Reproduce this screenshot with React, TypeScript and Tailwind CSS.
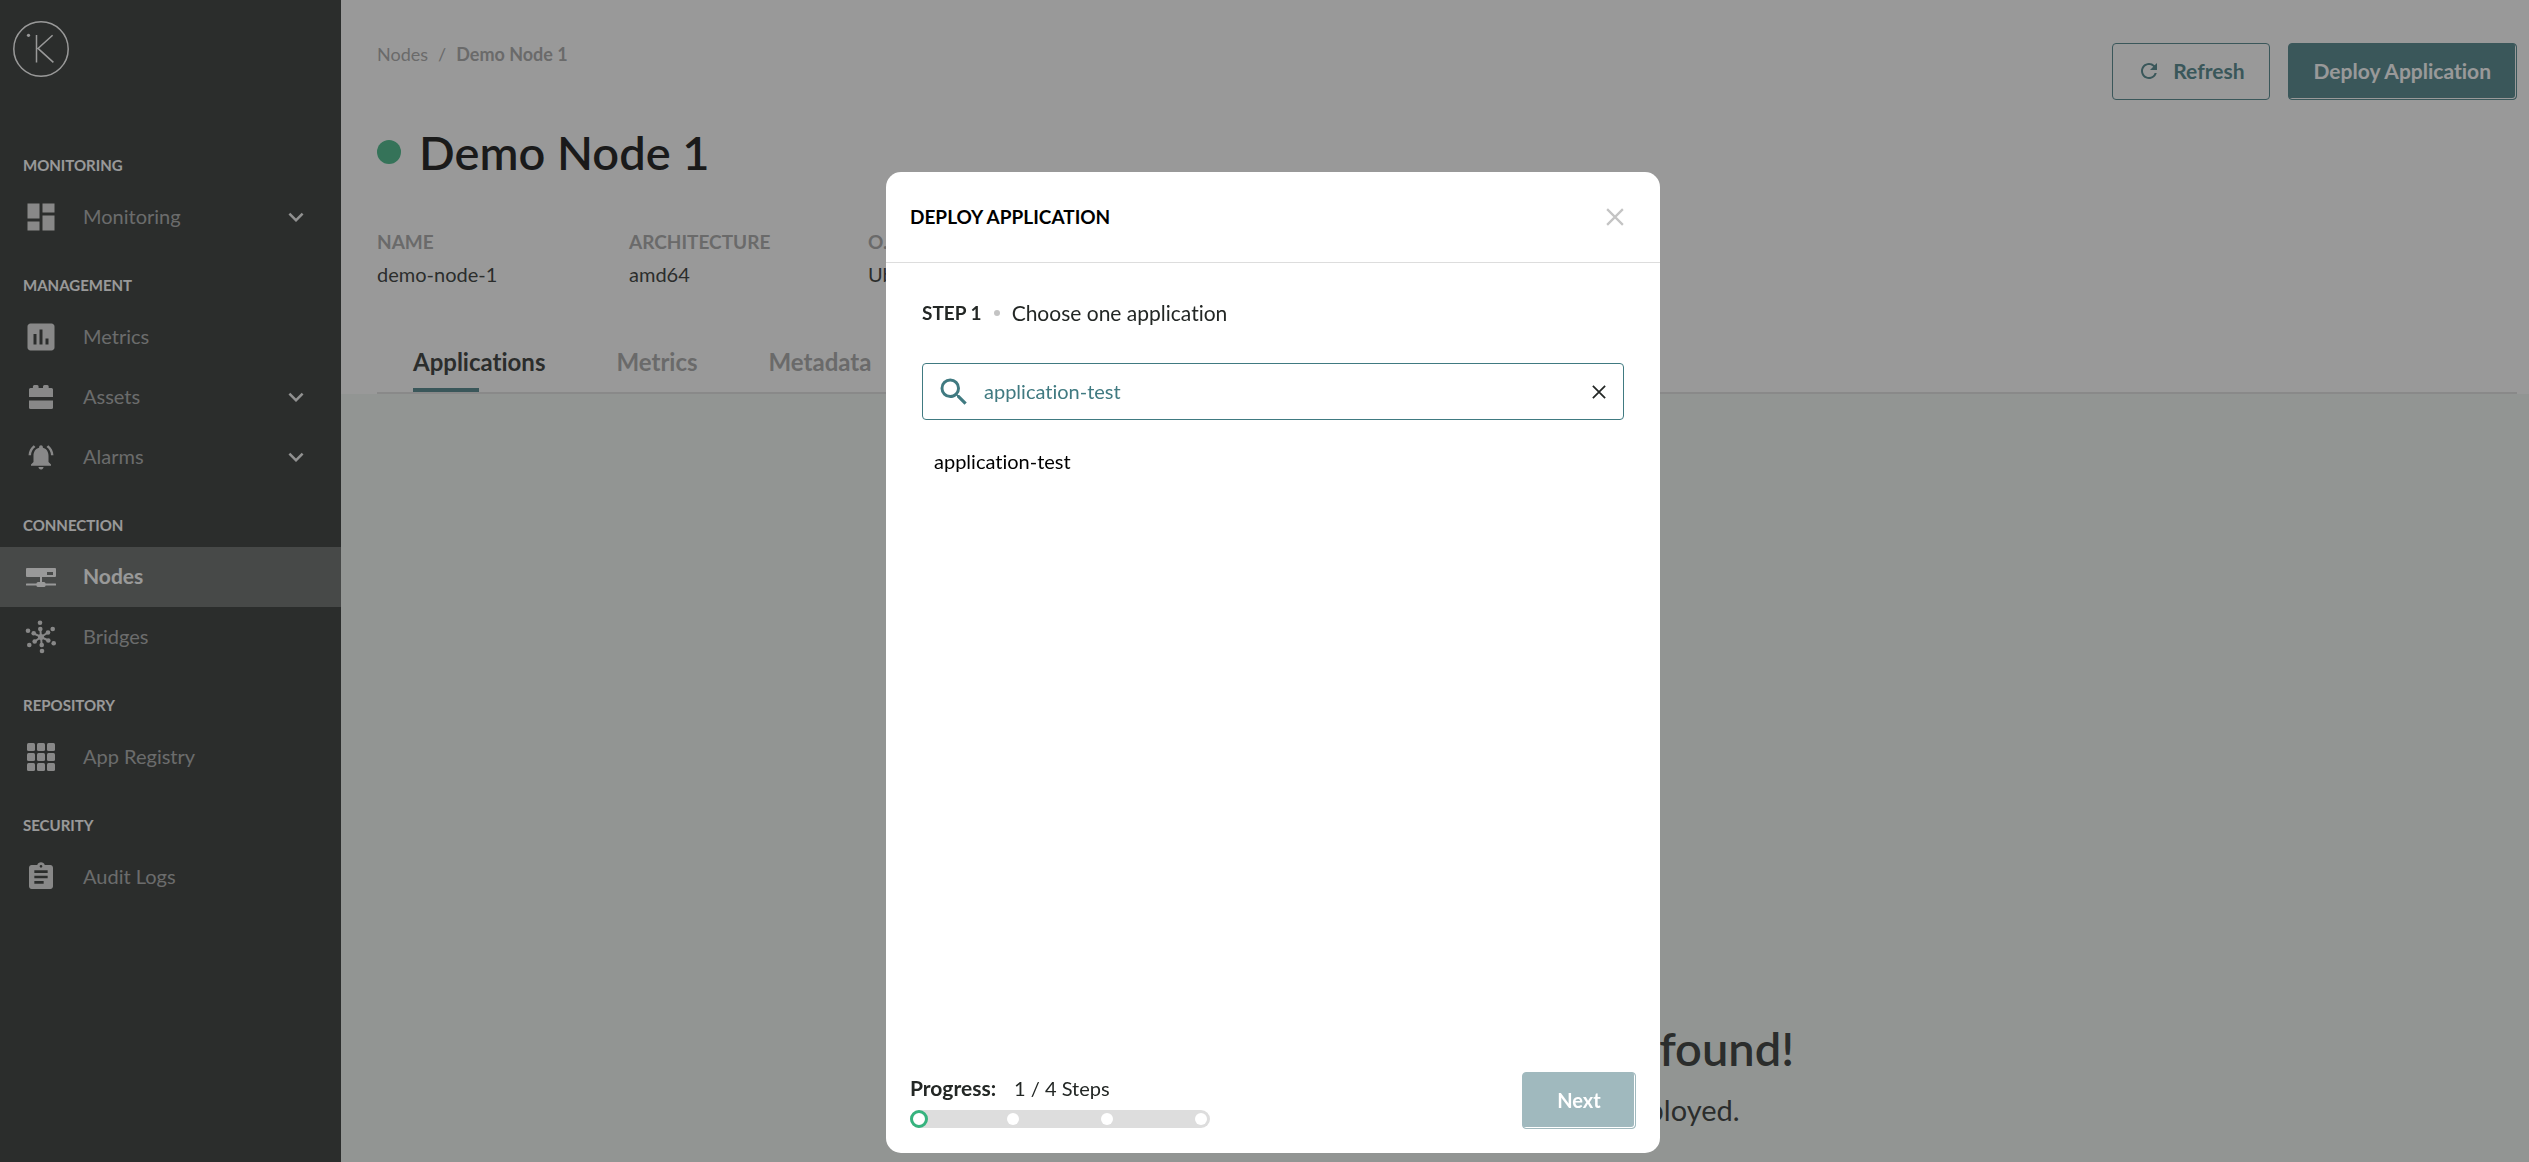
import React from 'react';
import {
  MdAssessment,
  MdAssignment,
  MdDashboard,
  MdExpandMore,
  MdNotificationsActive,
  MdRefresh,
  MdSearch,
} from 'react-icons/md';

type NavItem = {
  label: string;
  icon: React.ReactNode;
  expandable?: boolean;
  active?: boolean;
};

function Logo() {
  return (
    <svg viewBox="0 0 56 56" className="size-14" fill="none" stroke="white" strokeWidth="1.5" aria-hidden="true">
      <circle cx="28" cy="28" r="27.2" />
      <circle cx="15.5" cy="14.3" r="1.6" fill="white" stroke="none" />
      <path d="M23.5 14v27.6M39.6 14.2 25 27.4l15.4 14" />
    </svg>
  );
}

function AssetsIcon() {
  return (
    <svg viewBox="0 0 36 36" className="size-9" fill="currentColor" aria-hidden="true">
      <path d="M6 18v-7.5A1.5 1.5 0 0 1 7.5 9H9.9V7.5A1.5 1.5 0 0 1 11.4 6h2.7a1.5 1.5 0 0 1 1.5 1.5V9h4.4V7.5A1.5 1.5 0 0 1 21.5 6h2.7a1.5 1.5 0 0 1 1.5 1.5V9h2.8A1.5 1.5 0 0 1 30 10.5V18z" />
      <path d="M6 21.5h24v7a1.5 1.5 0 0 1-1.5 1.5h-21A1.5 1.5 0 0 1 6 28.5z" />
    </svg>
  );
}

function NodesIcon() {
  return (
    <svg viewBox="0 0 36 36" className="size-9" fill="currentColor" aria-hidden="true">
      <path
        fillRule="evenodd"
        d="M4 9h28a1 1 0 0 1 1 1v7a1 1 0 0 1-1 1H4a1 1 0 0 1-1-1v-7a1 1 0 0 1 1-1zm20 4v3h6v-3z"
      />
      <rect x="17" y="18" width="2" height="6" />
      <rect x="3" y="24.5" width="30" height="2" rx="0.5" />
      <rect x="13.5" y="23" width="9" height="5" rx="1.5" />
    </svg>
  );
}

const HUB_POINTS = [
  [17, 3.7, 17.3, 10],
  [29.7, 10, 25, 13.5],
  [30.7, 24.3, 25.3, 21.5],
  [19, 32, 18.7, 26],
  [6.3, 26, 11.7, 22.5],
  [5, 11.7, 10.7, 14.3],
];

function BridgesIcon() {
  return (
    <svg viewBox="0 0 36 36" className="size-9" fill="currentColor" aria-hidden="true">
      <circle cx="18" cy="18" r="3" />
      {HUB_POINTS.map(([ox, oy, ix, iy]) => (
        <g key={ox}>
          <circle cx={ox} cy={oy} r="2.3" />
          <circle cx={ix} cy={iy} r="2.3" />
          <line x1="18" y1="18" x2={ix} y2={iy} stroke="currentColor" strokeWidth="2" />
        </g>
      ))}
    </svg>
  );
}

function GridIcon() {
  const stops = [4, 14, 24];
  return (
    <svg viewBox="0 0 36 36" className="size-9" fill="currentColor" aria-hidden="true">
      {stops.map((y) => stops.map((x) => <rect key={`${x}-${y}`} x={x} y={y} width="8" height="8" rx="1.5" />))}
    </svg>
  );
}

function Cross({ className }: { className: string }) {
  return (
    <svg viewBox="0 0 16 16" className={className} fill="none" stroke="currentColor" strokeWidth="2" aria-hidden="true">
      <path d="M1 1l14 14M15 1 1 15" />
    </svg>
  );
}

const SECTIONS: { title: string; items: NavItem[] }[] = [
  {
    title: 'MONITORING',
    items: [{ label: 'Monitoring', icon: <MdDashboard className="size-9" />, expandable: true }],
  },
  {
    title: 'MANAGEMENT',
    items: [
      { label: 'Metrics', icon: <MdAssessment className="size-9" /> },
      { label: 'Assets', icon: <AssetsIcon />, expandable: true },
      { label: 'Alarms', icon: <MdNotificationsActive className="size-[30px]" />, expandable: true },
    ],
  },
  {
    title: 'CONNECTION',
    items: [
      { label: 'Nodes', icon: <NodesIcon />, active: true },
      { label: 'Bridges', icon: <BridgesIcon /> },
    ],
  },
  { title: 'REPOSITORY', items: [{ label: 'App Registry', icon: <GridIcon /> }] },
  { title: 'SECURITY', items: [{ label: 'Audit Logs', icon: <MdAssignment className="size-8" /> }] },
];

function Sidebar() {
  return (
    <aside className="w-[341px] shrink-0 bg-[#232725]">
      <div className="px-[13px] pt-[21px] pb-[50px]">
        <Logo />
      </div>
      <nav>
        {SECTIONS.map((section) => (
          <section key={section.title}>
            <h2 className="flex h-15 items-center px-[23px] pt-4 text-[15px] font-bold text-white">{section.title}</h2>
            {section.items.map((item) => (
              <a
                key={item.label}
                href="#"
                className={
                  item.active
                    ? 'flex h-15 items-center gap-6 bg-[#5b5f5d] pr-[30px] pl-[23px] text-[21px] font-bold text-white'
                    : 'flex h-15 items-center gap-6 pr-[30px] pl-[23px] text-xl text-[#a3a5a4]'
                }
              >
                <span className={item.active ? 'flex w-9 justify-center text-white' : 'flex w-9 justify-center text-[#dddddd]'}>
                  {item.icon}
                </span>
                <span className="grow pb-0.5">{item.label}</span>
                {item.expandable && <MdExpandMore className="size-[30px] text-[#eeeeee]" />}
              </a>
            ))}
          </section>
        ))}
      </nav>
    </aside>
  );
}

const FACTS = [
  ['NAME', 'demo-node-1'],
  ['ARCHITECTURE', 'amd64'],
  ['O.S.', 'Ubuntu'],
];

function NodePage() {
  return (
    <main className="flex min-w-0 grow flex-col bg-[#f1f7f3]">
      <header className="bg-white pr-3 pl-9">
        <div className="flex items-start justify-between pt-[43px]">
          <nav aria-label="Breadcrumb" className="flex gap-[10px] text-lg leading-[22px] text-[#a1a1a1]">
            <a href="#">Nodes</a>
            <span>/</span>
            <span className="font-bold">Demo Node 1</span>
          </nav>
          <div className="flex gap-[18px] text-[21px] font-bold">
            <button
              type="button"
              className="flex h-[57px] items-center gap-3 rounded border border-[#407a81] px-6 pb-0.5 text-[#407a81]"
            >
              <MdRefresh className="size-6" />
              Refresh
            </button>
            <button
              type="button"
              className="h-[57px] rounded border border-[#407a81] bg-[#407a81] px-[25px] pb-0.5 text-white shadow-[inset_-1px_-1px_0_white]"
            >
              Deploy Application
            </button>
          </div>
        </div>
        <div className="flex items-center gap-[18px] pt-[22px]">
          <span className="size-6 rounded-full bg-[#36b37e]" />
          <h1 className="text-[47px] leading-[60px] font-semibold text-black">Demo Node 1</h1>
        </div>
        <dl className="grid grid-cols-[252px_239px_auto] pt-11">
          {FACTS.map(([term, value]) => (
            <div key={term}>
              <dt className="text-[19px] leading-8 font-bold text-[#a1a1a1]">{term}</dt>
              <dd className="text-xl leading-8 text-[#232725]">{value}</dd>
            </div>
          ))}
        </dl>
        <div role="tablist" className="flex gap-[71px] border-b-2 border-[#dfdfdf] pt-[54px] pl-9 text-2xl leading-9 font-bold">
          <button type="button" role="tab" aria-selected="true" className="text-[#232725]">
            Applications
            <span className="mt-2 block h-1 w-[66px] bg-[#407a81]" />
          </button>
          <button type="button" role="tab" aria-selected="false" className="self-start text-[#a1a1a1]">
            Metrics
          </button>
          <button type="button" role="tab" aria-selected="false" className="self-start text-[#a1a1a1]">
            Metadata
          </button>
        </div>
      </header>
      <section className="flex grow flex-col items-center justify-end pb-8 text-[#232725]">
        <h2 className="text-[47px] leading-[60px] font-semibold">No active applications were found!</h2>
        <p className="pt-3 text-[29px] leading-10">This node has no running applications deployed.</p>
      </section>
    </main>
  );
}

function ProgressBar() {
  return (
    <div
      role="progressbar"
      aria-valuemin={0}
      aria-valuemax={4}
      aria-valuenow={1}
      aria-label="Steps"
      className="flex h-[18px] w-[300px] items-center justify-between rounded-full bg-[#dddddd] px-[3px]"
    >
      <span className="-mx-[3px] size-[18px] rounded-full border-3 border-[#36b37e] bg-white" />
      <span className="size-3 rounded-full bg-white" />
      <span className="size-3 rounded-full bg-white" />
      <span className="size-3 rounded-full bg-white" />
    </div>
  );
}

function DeployDialog() {
  return (
    <div className="fixed inset-0 flex justify-center bg-[#333333]/50 pt-[172px] pb-[9px] pl-[17px]">
      <div role="dialog" aria-labelledby="deploy-title" className="flex w-[774px] flex-col rounded-[15px] bg-white">
        <header className="flex h-[91px] items-center justify-between border-b border-[#dddddd] pr-9 pl-6">
          <h2 id="deploy-title" className="text-[19px] font-bold text-black">
            DEPLOY APPLICATION
          </h2>
          <button type="button" aria-label="Close" className="text-[#c4c4c4]">
            <Cross className="size-[18px]" />
          </button>
        </header>
        <div className="flex grow flex-col px-9 pt-[34px]">
          <div className="flex items-center gap-3 leading-8 text-[#232725]">
            <span className="text-[19px] font-bold">STEP 1</span>
            <span className="size-[6px] rounded-full bg-[#c4c4c4]" />
            <span className="text-[21px]">Choose one application</span>
          </div>
          <div className="mt-[34px] flex h-[57px] items-center rounded border border-[#407a81] pr-[17px] pl-[13px] text-[#407a81]">
            <MdSearch className="size-9" />
            <input
              type="text"
              aria-label="Search application"
              defaultValue="application-test"
              className="ml-3 min-w-0 grow pb-0.5 text-xl outline-none"
            />
            <button type="button" aria-label="Clear search" className="text-[#232725]">
              <Cross className="size-[14px]" />
            </button>
          </div>
          <ul className="pt-[23px]">
            <li>
              <button type="button" className="px-3 text-xl leading-9 text-black">
                application-test
              </button>
            </li>
          </ul>
        </div>
        <footer className="flex items-end justify-between px-6 pb-6">
          <div className="pb-px">
            <p className="flex items-baseline gap-[18px] leading-8 text-[#232725]">
              <span className="text-[21px] font-bold">Progress:</span>
              <span className="text-xl">1 / 4 Steps</span>
            </p>
            <div className="pt-[6px]">
              <ProgressBar />
            </div>
          </div>
          <button
            type="button"
            className="h-[57px] w-[114px] rounded border border-[#a0b9be] bg-[#a0b9be] pb-0.5 text-xl font-bold text-white shadow-[inset_-1px_-1px_0_white]"
          >
            Next
          </button>
        </footer>
      </div>
    </div>
  );
}

export default function App() {
  return (
    <div className="flex min-h-screen font-[Lato,sans-serif] [font-variant-ligatures:none]">
      <Sidebar />
      <NodePage />
      <DeployDialog />
    </div>
  );
}
